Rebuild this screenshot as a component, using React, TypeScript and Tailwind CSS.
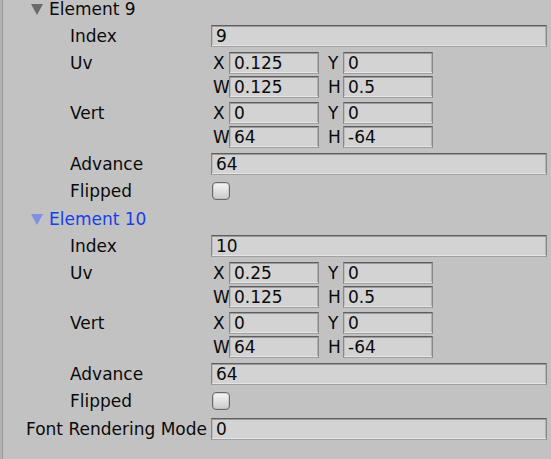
import React from "react";

const fieldCls =
  "h-[22px] flex items-center pl-[4px] bg-[#d3d3d3] border border-t-[#5e5e5e] border-l-[#888888] border-r-[#888888] border-b-[#a0a0a0] shadow-[inset_0_1px_0_#9a9a9a,inset_0_-1px_0_#e4e4e4,inset_-1px_0_0_#b0b0b0,inset_1px_0_0_#bdbdbd] leading-none whitespace-nowrap overflow-hidden";

function Tri({ color }: { color: string }) {
  return (
    <svg width="12" height="11" viewBox="0 0 12 11" className="block">
      <path d="M0 0 H12 L6 11 Z" fill={color} />
    </svg>
  );
}

function Header({ label, active, cls }: { label: string; active?: boolean; cls: string }) {
  return (
    <div className={`h-[19px] flex items-center pl-[31px] ${cls}`}>
      <Tri color={active ? "#7f90e4" : "#6b6b6b"} />
      <span className={`ml-[6px] leading-none ${active ? "text-[#1640e8]" : "text-[#0a0a0a]"}`}>
        {label}
      </span>
    </div>
  );
}

function Label({ text, indent }: { text: string; indent?: boolean }) {
  return (
    <div className={`w-[211px] shrink-0 leading-none whitespace-nowrap ${indent ? "pl-[26px]" : "pl-[70px]"}`}>
      {text}
    </div>
  );
}

function FullRow({ label, value, cls, indent }: { label: string; value: string; cls: string; indent?: boolean }) {
  return (
    <div className={`h-[22px] flex items-center ${cls}`}>
      <Label text={label} indent={indent} />
      <div className={`${fieldCls} w-[336px]`}>{value}</div>
    </div>
  );
}

function VecRow({
  label,
  a,
  av,
  b,
  bv,
  cls,
}: {
  label: string;
  a: string;
  av: string;
  b: string;
  bv: string;
  cls: string;
}) {
  return (
    <div className={`h-[22px] flex items-center ${cls}`}>
      <Label text={label} />
      <div className="w-[18px] pl-[2px] leading-none">{a}</div>
      <div className={`${fieldCls} w-[90px]`}>{av}</div>
      <div className="w-[24px] pl-[9px] leading-none">{b}</div>
      <div className={`${fieldCls} w-[90px]`}>{bv}</div>
    </div>
  );
}

function CheckRow({ label, cls }: { label: string; cls: string }) {
  return (
    <div className={`h-[22px] flex items-center ${cls}`}>
      <Label text={label} />
      <div className="ml-[1px] w-[18px] h-[18px] rounded-[4px] border border-[#6a6a6a] bg-gradient-to-b from-[#f6f6f6] to-[#cbcbcb] shadow-[inset_0_0_0_1px_#a8a8a866]" />
    </div>
  );
}

function Section({
  name,
  active,
  index,
  uvx,
  headerCls,
}: {
  name: string;
  active?: boolean;
  index: string;
  uvx: string;
  headerCls: string;
}) {
  return (
    <>
      <Header label={name} active={active} cls={headerCls} />
      <FullRow label="Index" value={index} cls="mt-[6px]" />
      <VecRow label="Uv" a="X" av={uvx} b="Y" bv="0" cls="mt-[5px]" />
      <VecRow label="" a="W" av="0.125" b="H" bv="0.5" cls="mt-[2px]" />
      <VecRow label="Vert" a="X" av="0" b="Y" bv="0" cls="mt-[4px]" />
      <VecRow label="" a="W" av="64" b="H" bv="-64" cls="mt-[2px]" />
      <FullRow label="Advance" value="64" cls="mt-[5px]" />
      <CheckRow label="Flipped" cls="mt-[5px]" />
    </>
  );
}

export default function App() {
  return (
    <div className="w-[551px] h-[459px] overflow-hidden bg-[#c2c2c2] shadow-[inset_2px_0_0_#b3b3b3,inset_3px_0_0_#999999] font-['DejaVu_Sans',sans-serif] text-[17px] text-[#0a0a0a]">
      <div className="flex flex-col">
        <Section name="Element 9" index="9" uvx="0.125" headerCls="" />
        <Section name="Element 10" active index="10" uvx="0.25" headerCls="mt-[8px]" />
        <FullRow label="Font Rendering Mode" value="0" cls="mt-[6px]" indent />
      </div>
    </div>
  );
}
